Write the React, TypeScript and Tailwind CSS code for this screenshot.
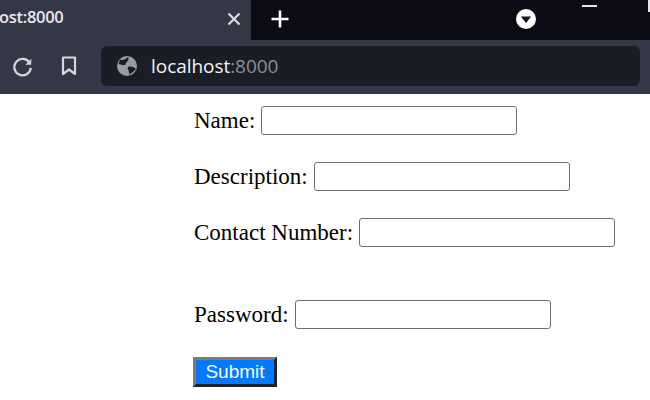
import React from 'react';

const fields = [
  { label: 'Name:', gap: 'mt-0' },
  { label: 'Description:', gap: 'mt-[27px]' },
  { label: 'Contact Number:', gap: 'mt-[27px]' },
  { label: 'Password:', gap: 'mt-[53px]' },
];

export default function App() {
  return (
    <div className="flex flex-col w-[650px] h-[400px] overflow-hidden bg-white">
      {/* Tab strip */}
      <div className="relative flex h-[40px] bg-[#0b0b16]">
        <div className="flex items-center w-[251px] h-full bg-[#343746] overflow-hidden">
          <span className="ml-[-1px] w-[224px] pb-[5px] text-[16.5px] font-semibold text-[#e8e9ee] font-['Open_Sans',sans-serif] tracking-[-0.3px]">
            ost:8000
          </span>
          <svg width="14" height="14" viewBox="0 0 14 14" className="mb-[2px] ml-[4px]">
            <path d="M1.5 1.5 L12.5 12.5 M12.5 1.5 L1.5 12.5" stroke="#d9dae0" strokeWidth="2.2" />
          </svg>
        </div>
        <svg width="18" height="18" viewBox="0 0 18 18" className="mt-[10px] ml-[20px]">
          <path d="M9 0.5 V17.5 M0.5 9 H17.5" stroke="#ffffff" strokeWidth="2.6" />
        </svg>
        <svg width="20" height="20" viewBox="0 0 20 20" className="mt-[9px] ml-[227px]">
          <circle cx="10" cy="10" r="10" fill="#ffffff" />
          <path d="M4.8 7.5 H15.2 L10 14 Z" fill="#14141f" />
        </svg>
        {/* Window controls */}
        <div className="absolute left-[582px] top-[5px] w-[15px] h-[2px] bg-[#e6e6ea]" />
        <div className="absolute left-[648px] top-0 w-[2px] h-[12px] bg-[#e6e6ea]" />
      </div>

      {/* Toolbar */}
      <div className="flex items-center h-[54px] bg-[#343746] pr-[10px] pb-[2px]">
        <svg width="22" height="22" viewBox="0 0 24 24" fill="none" className="ml-[12px]">
          <path d="M19.5 9 A9 9 0 1 0 20.5 14" stroke="#d6d7dc" strokeWidth="2.4" fill="none" />
          <path d="M21 4 V10.5 H14.5 Z" fill="#d6d7dc" />
        </svg>
        <svg width="16" height="20" viewBox="0 0 16 20" fill="none" className="ml-[27px]">
          <path d="M2 1.5 H14 V18 L8 13.5 L2 18 Z" stroke="#d6d7dc" strokeWidth="2.2" strokeLinejoin="round" />
        </svg>
        <div className="flex flex-1 items-center h-[40px] ml-[24px] bg-[#1b1d26] rounded-[6px]">
          <svg width="20" height="20" viewBox="0 0 20 20" className="ml-[16px]">
            <circle cx="10" cy="10" r="10" fill="#9b9ca3" />
            <path d="M3 3.5 C6 5 9 3 11 1 C13 4 9 6 8.5 8.5 C6 10 4 8 1.5 8 Z M11 11 C14 10 17 11 19 13 C17 15 15 17 12 18.5 C13 15 10 14 11 11 Z" fill="#1b1d26" />
          </svg>
          <span className="ml-[14px] text-[19px] text-[#f1f2f5] font-['Open_Sans',sans-serif] tracking-[-0.05px]">
            localhost<span className="text-[#8d8e95]">:8000</span>
          </span>
        </div>
      </div>

      {/* Form */}
      <form className="flex flex-col items-start pl-[193px] pt-[12px] font-['Liberation_Serif',serif] text-[23px] text-black">
        {fields.map((f) => (
          <label key={f.label} className={`flex items-center h-[29px] ${f.gap}`}>
            <span className="pl-[1px] pt-[1px]">{f.label}</span>
            <input
              type="text"
              className="w-[256px] h-[29px] ml-[6px] bg-white border border-[#6f6f6f] rounded-[3px]"
            />
          </label>
        ))}
        <button
          type="button"
          className="mt-[28px] w-[84px] h-[30px] pb-[2px] leading-none bg-[#007bff] text-white text-[19px] font-['Liberation_Sans',sans-serif] border-[3px] border-t-[#7a7a7a] border-l-[#7a7a7a] border-r-[#222222] border-b-[#222222]"
        >
          Submit
        </button>
      </form>
    </div>
  );
}
